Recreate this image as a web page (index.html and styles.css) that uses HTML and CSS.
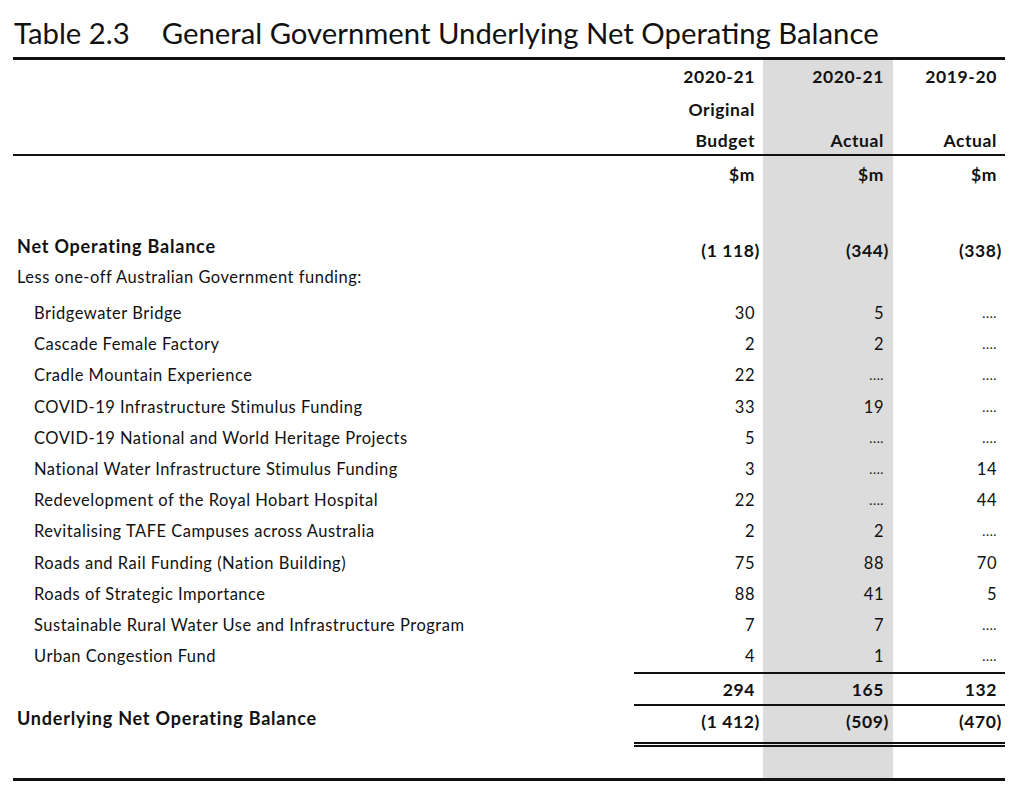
FILE: index.html
```html
<!DOCTYPE html>
<html lang="en">
<head>
<meta charset="utf-8">
<title>Table 2.3 General Government Underlying Net Operating Balance</title>
<link rel="stylesheet" href="styles.css">
</head>
<body>
<div class="page">
  <h1 class="title"><span class="num">Table 2.3</span>General Government Underlying Net Operating Balance</h1>
  <table class="tbl">
    <colgroup>
      <col class="c-label">
      <col class="c-1">
      <col class="c-2">
      <col class="c-3">
    </colgroup>
    <tbody>
      <tr class="h1">
        <td></td><td class="n b">2020-21</td><td class="n sh b">2020-21</td><td class="n b">2019-20</td>
      </tr>
      <tr class="h2">
        <td></td><td class="n b">Original</td><td class="n sh"></td><td class="n"></td>
      </tr>
      <tr class="h3">
        <td></td><td class="n b">Budget</td><td class="n sh b">Actual</td><td class="n b">Actual</td>
      </tr>
      <tr class="h4">
        <td></td><td class="n b">$m</td><td class="n sh b">$m</td><td class="n b">$m</td>
      </tr>
      <tr class="gap">
        <td></td><td class="n"></td><td class="n sh"></td><td class="n"></td>
      </tr>
      <tr class="nob">
        <td class="lbl b">Net Operating Balance</td><td class="n b neg">(1 118)</td><td class="n sh b neg">(344)</td><td class="n b neg">(338)</td>
      </tr>
      <tr class="less">
        <td class="lbl">Less one-off Australian Government funding:</td><td class="n"></td><td class="n sh"></td><td class="n"></td>
      </tr>
      <tr class="item"><td class="lbl ind">Bridgewater Bridge</td><td class="n">30</td><td class="n sh">5</td><td class="n dots">....</td></tr>
      <tr class="item"><td class="lbl ind">Cascade Female Factory</td><td class="n">2</td><td class="n sh">2</td><td class="n dots">....</td></tr>
      <tr class="item"><td class="lbl ind">Cradle Mountain Experience</td><td class="n">22</td><td class="n sh dots">....</td><td class="n dots">....</td></tr>
      <tr class="item"><td class="lbl ind">COVID-19 Infrastructure Stimulus Funding</td><td class="n">33</td><td class="n sh">19</td><td class="n dots">....</td></tr>
      <tr class="item"><td class="lbl ind">COVID-19 National and World Heritage Projects</td><td class="n">5</td><td class="n sh dots">....</td><td class="n dots">....</td></tr>
      <tr class="item"><td class="lbl ind">National Water Infrastructure Stimulus Funding</td><td class="n">3</td><td class="n sh dots">....</td><td class="n">14</td></tr>
      <tr class="item"><td class="lbl ind">Redevelopment of the Royal Hobart Hospital</td><td class="n">22</td><td class="n sh dots">....</td><td class="n">44</td></tr>
      <tr class="item"><td class="lbl ind">Revitalising TAFE Campuses across Australia</td><td class="n">2</td><td class="n sh">2</td><td class="n dots">....</td></tr>
      <tr class="item"><td class="lbl ind">Roads and Rail Funding (Nation Building)</td><td class="n">75</td><td class="n sh">88</td><td class="n">70</td></tr>
      <tr class="item"><td class="lbl ind">Roads of Strategic Importance</td><td class="n">88</td><td class="n sh">41</td><td class="n">5</td></tr>
      <tr class="item"><td class="lbl ind">Sustainable Rural Water Use and Infrastructure Program</td><td class="n">7</td><td class="n sh">7</td><td class="n dots">....</td></tr>
      <tr class="item"><td class="lbl ind">Urban Congestion Fund</td><td class="n">4</td><td class="n sh">1</td><td class="n dots">....</td></tr>
      <tr class="total">
        <td></td><td class="n b">294</td><td class="n sh b">165</td><td class="n b">132</td>
      </tr>
      <tr class="unob">
        <td class="lbl b">Underlying Net Operating Balance</td><td class="n b neg">(1 412)</td><td class="n sh b neg">(509)</td><td class="n b neg">(470)</td>
      </tr>
      <tr class="end">
        <td></td><td class="n"></td><td class="n sh"></td><td class="n"></td>
      </tr>
    </tbody>
  </table>
</div>
</body>
</html>
```

FILE: styles.css
```css
html, body {
  margin: 0;
  padding: 0;
  background: #ffffff;
}

body {
  font-family: "Lato", "Liberation Sans", sans-serif;
  color: #111111;
}

.page {
  width: 992px;
  margin-left: 13px;
  padding-top: 15px;
}

.title {
  margin: 0;
  padding: 0 0 6px 1px;
  font-size: 29.3px;
  font-weight: 400;
  line-height: 36px;
  border-bottom: 3px solid #111111;
  white-space: nowrap;
}

.title .num {
  margin-right: 32px;
}

.tbl {
  width: 992px;
  table-layout: fixed;
  border-collapse: separate;
  border-spacing: 0;
  font-size: 16.5px;
  letter-spacing: 0.5px;
}

.c-label { width: 621px; }
.c-1 { width: 129px; }
.c-2 { width: 130px; }
.c-3 { width: 112px; }

.tbl td {
  padding: 0;
  vertical-align: top;
  line-height: 31px;
  white-space: nowrap;
}

.tbl td.b {
  font-weight: 700;
  font-size: 17.5px;
  letter-spacing: 0.6px;
}
.tbl td.lbl.b {
  font-size: 18px;
  letter-spacing: 0.8px;
}

.tbl td.lbl { padding-left: 4px; }
.tbl td.lbl.ind { padding-left: 21px; }

.tbl td.n {
  text-align: right;
  padding-right: 8px;
}
.tbl td.n.sh { padding-right: 9px; }
.tbl td.n.neg { padding-right: 3px; }
.tbl td.n.sh.neg { padding-right: 4px; }

.sh { background: #dcdcdc; }

.tbl td.dots {
  font-size: 13px;
  letter-spacing: 0.6px;
}

/* header rows */
.tbl .h1 td { line-height: 33px; }
.tbl .h2 td { line-height: 34px; }
.tbl .h3 td {
  line-height: 26px;
  height: 27px;
  border-bottom: 2px solid #111111;
}
.tbl .h3 td.n { padding-top: 1px; height: 26px; }
.tbl .h4 td { line-height: 37px; }
.tbl .gap td { height: 38px; line-height: 38px; }

/* net operating balance */
.tbl .nob td { line-height: 31px; height: 35px; }
.tbl .nob td.n { padding-top: 5px; line-height: 30px; height: 30px; }
.tbl .less td { line-height: 23px; padding-bottom: 9px; }

.tbl .item td { line-height: 31.2px; }

/* totals */
.tbl .total td.n {
  border-top: 2px solid #111111;
  border-bottom: 2px solid #111111;
  padding-top: 1px;
  line-height: 29px;
}

.tbl .unob td.lbl { line-height: 25px; }
.tbl .unob td.n {
  line-height: 31px;
  padding-bottom: 5px;
  border-bottom: 5px double #111111;
}

.tbl .end td {
  height: 31px;
  border-bottom: 3px solid #111111;
}
```
